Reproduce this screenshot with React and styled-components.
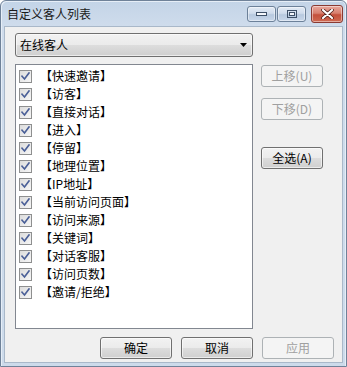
import React from "react";
import styled, { createGlobalStyle } from "styled-components";

const Global = createGlobalStyle`
  html, body { margin: 0; padding: 0; background: #ffffff; }
  body { font-family: "Noto Sans CJK SC", "Noto Sans", sans-serif; font-size: 12px; }
`;

const Window = styled.div`
  box-sizing: border-box;
  width: 347px;
  height: 367px;
  border: 1px solid #6f8299;
  border-radius: 6px 6px 0 0;
  background: linear-gradient(#c3d4e7 0px, #cfdcec 26px, #cddbeb 100%);
  display: flex;
  flex-direction: column;
  padding: 0 3px 3px 3px;
  box-shadow: inset 1px 1px 0 #e6eef7, inset -1px 0 0 #e6eef7;
`;

const TitleBar = styled.div`
  height: 25px;
  display: flex;
  align-items: flex-start;
  justify-content: space-between;
`;

const Title = styled.div`
  padding: 5px 0 0 3px;
  font-size: 12px;
  line-height: 16px;
  color: #1a1a1a;
`;

const Controls = styled.div`
  display: flex;
  align-items: flex-start;
  gap: 1px;
  padding-top: 4px;
`;

const CtlButton = styled.div`
  box-sizing: border-box;
  width: ${(p) => p.$w}px;
  height: ${(p) => p.$h}px;
  margin-top: ${(p) => p.$mt || 0}px;
  margin-left: ${(p) => p.$ml || 0}px;
  border: 1px solid ${(p) => (p.$close ? "#8a3a32" : "#6c8199")};
  border-radius: 3px;
  background: ${(p) =>
    p.$close
      ? "linear-gradient(#e8a79c 0%, #d7806f 45%, #c4503c 55%, #cf6a52 100%)"
      : "linear-gradient(#e3ebf5 0%, #cfdcec 45%, #b7c9df 55%, #c8d7ea 100%)"};
  box-shadow: inset 0 0 0 1px rgba(255, 255, 255, 0.45);
  display: flex;
  align-items: center;
  justify-content: center;
`;

const Panel = styled.div`
  flex: 1;
  background: #f0f0f0;
  border: 1px solid #a9b8c9;
  display: flex;
  flex-direction: column;
  padding: 6px 8px 0 10px;
`;

const Main = styled.div`
  display: flex;
  gap: 8px;
`;

const LeftCol = styled.div`
  display: flex;
  flex-direction: column;
  gap: 7px;
`;

const Combo = styled.div`
  box-sizing: border-box;
  width: 238px;
  height: 24px;
  border: 1px solid #707070;
  border-radius: 3px;
  background: linear-gradient(#f2f2f2 0%, #ebebeb 50%, #dddddd 51%, #cfcfcf 100%);
  box-shadow: inset 0 0 0 1px rgba(255, 255, 255, 0.6);
  display: flex;
  align-items: center;
  justify-content: space-between;
  padding: 0 5px 0 4px;
  color: #000;
  line-height: 16px;
`;

const ListBox = styled.div`
  box-sizing: border-box;
  width: 238px;
  height: 265px;
  border: 1px solid #828790;
  background: #ffffff;
  padding: 2px 0 0 3px;
  display: flex;
  flex-direction: column;
`;

const Row = styled.div`
  height: 18px;
  display: flex;
  align-items: center;
  gap: 8px;
  color: #000;
  line-height: 16px;
  white-space: nowrap;
`;

const Box = styled.div`
  box-sizing: border-box;
  width: 13px;
  height: 13px;
  border: 1px solid #8e8f8f;
  background: linear-gradient(135deg, #dcdcdc 0%, #f6f6f6 100%);
  display: flex;
  align-items: center;
  justify-content: center;
`;

const RightCol = styled.div`
  display: flex;
  flex-direction: column;
  padding-top: 32px;
`;

const Button = styled.div`
  box-sizing: border-box;
  width: ${(p) => p.$w}px;
  height: 22px;
  margin-top: ${(p) => p.$mt || 0}px;
  border: 1px solid ${(p) => (p.$disabled ? "#adb2b5" : "#707070")};
  border-radius: 3px;
  background: ${(p) =>
    p.$disabled
      ? "#f4f4f4"
      : "linear-gradient(#f2f2f2 0%, #ebebeb 50%, #dddddd 51%, #cfcfcf 100%)"};
  box-shadow: ${(p) => (p.$disabled ? "none" : "inset 0 0 0 1px rgba(255,255,255,0.6)")};
  color: ${(p) => (p.$disabled ? "#a0a0a0" : "#000")};
  display: flex;
  align-items: center;
  justify-content: center;
  line-height: 16px;
  font-size: 12px;
`;

const BottomBar = styled.div`
  display: flex;
  justify-content: flex-end;
  gap: 9px;
  margin-top: 8px;
`;

const items = [
  "快速邀请",
  "访客",
  "直接对话",
  "进入",
  "停留",
  "地理位置",
  "IP地址",
  "当前访问页面",
  "访问来源",
  "关键词",
  "对话客服",
  "访问页数",
  "邀请/拒绝",
];

function Check() {
  return (
    <svg width="9" height="9" viewBox="0 0 9 9">
      <path d="M1 4.2 L3.5 7 L8 1" fill="none" stroke="#4a5f97" strokeWidth="1.7" strokeLinecap="square" />
    </svg>
  );
}

export default function App() {
  return (
    <>
      <Global />
      <Window>
        <TitleBar>
          <Title>自定义客人列表</Title>
          <Controls>
            <CtlButton $w={29} $h={16} $mt={1}>
              <svg width="11" height="4" viewBox="0 0 11 4">
                <rect x="0.5" y="0.5" width="10" height="3" fill="#f4f7fb" stroke="#3d4f66" />
              </svg>
            </CtlButton>
            <CtlButton $w={29} $h={16} $mt={1}>
              <svg width="10" height="8" viewBox="0 0 10 8">
                <rect x="0.5" y="0.5" width="9" height="7" fill="none" stroke="#3d4f66" />
                <rect x="2.5" y="2.5" width="5" height="3" fill="#f4f7fb" stroke="#3d4f66" />
              </svg>
            </CtlButton>
            <CtlButton $close $w={32} $h={18} $ml={4}>
              <svg width="13" height="10" viewBox="0 0 13 10">
                <path d="M2 1 L11 9 M11 1 L2 9" stroke="#4a1a14" strokeWidth="3.6" strokeLinecap="round" />
                <path d="M2 1 L11 9 M11 1 L2 9" stroke="#ffffff" strokeWidth="2.2" strokeLinecap="round" />
              </svg>
            </CtlButton>
          </Controls>
        </TitleBar>
        <Panel>
          <Main>
            <LeftCol>
              <Combo>
                <span>在线客人</span>
                <svg width="7" height="4" viewBox="0 0 7 4">
                  <path d="M0 0 H7 L3.5 4 Z" fill="#000" />
                </svg>
              </Combo>
              <ListBox>
                {items.map((t) => (
                  <Row key={t}>
                    <Box>
                      <Check />
                    </Box>
                    <span>【{t}】</span>
                  </Row>
                ))}
              </ListBox>
            </LeftCol>
            <RightCol>
              <Button $w={62} $disabled>上移(U)</Button>
              <Button $w={62} $disabled $mt={11}>下移(D)</Button>
              <Button $w={62} $mt={27}>全选(A)</Button>
            </RightCol>
          </Main>
          <BottomBar>
            <Button $w={72}>确定</Button>
            <Button $w={72}>取消</Button>
            <Button $w={72} $disabled>应用</Button>
          </BottomBar>
        </Panel>
      </Window>
    </>
  );
}
